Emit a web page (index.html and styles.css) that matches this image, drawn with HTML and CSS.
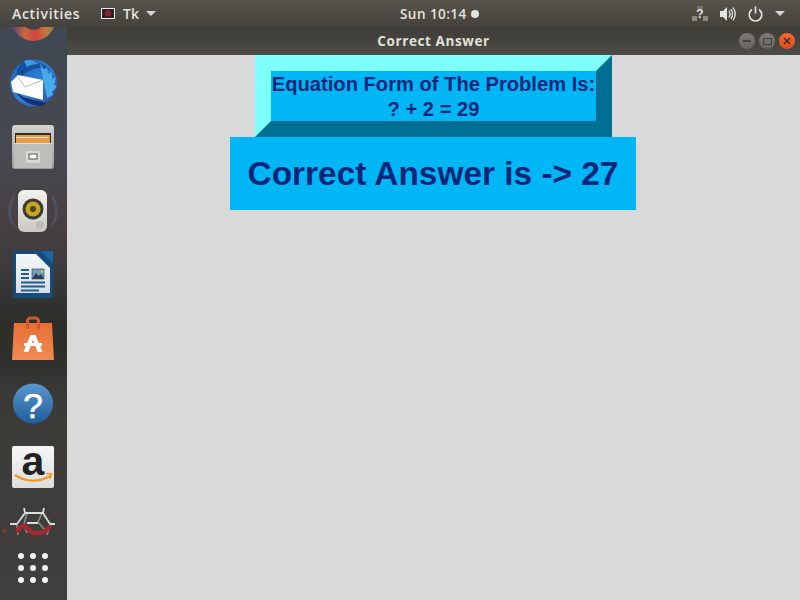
FILE: index.html
```html
<!DOCTYPE html>
<html lang="en">

<head>
  <meta charset="UTF-8">
  <title>Correct Answer</title>
  <link rel="stylesheet" href="styles.css">
</head>

<body>
  <header class="topbar">
    <div class="topbar-left">
      <span class="activities">Activities</span>
      <span class="tk-menu">
        <svg class="tk-icon" width="14" height="11" viewBox="0 0 14 11">
          <rect x="0.5" y="0.5" width="13" height="10" fill="#2a2426" stroke="#eeeeec" />
          <circle cx="7" cy="5.5" r="3" fill="#a3202c" />
          <path d="M5.500 4l3 3" stroke="#3a2426" stroke-width="0.800" />
        </svg>
        <span class="tk-label">Tk</span>
        <span class="caret"></span>
      </span>
    </div>
    <div class="clock">
      <span>Sun 10:14</span>
      <span class="clock-dot"></span>
    </div>
    <div class="tray">
      <svg width="16" height="16" viewBox="0 0 16 16">
        <rect x="5" y="0" width="6" height="3" fill="#75736c" />
        <rect x="0" y="10" width="5" height="5" fill="#8a8880" />
        <rect x="11" y="10" width="5" height="5" fill="#8a8880" />
        <text x="8" y="12" class="tray-q">?</text>
      </svg>
      <svg width="16" height="16" viewBox="0 0 16 16">
        <path d="M0 5h3l4-4v14l-4-4H0z" fill="#e4e4e0" />
        <path d="M9 4.500q2 3.500 0 7M11 3q3 5 0 10M13 1.500q4.500 6.500 0 13" fill="none" stroke="#e4e4e0" stroke-width="1.300" />
      </svg>
      <svg width="15" height="16" viewBox="0 0 15 16">
        <path d="M4 3.500a6.300 6.300 0 1 0 7 0" fill="none" stroke="#e4e4e0" stroke-width="1.600" />
        <path d="M7.500 0.500v7" stroke="#e4e4e0" stroke-width="1.600" />
      </svg>
      <span class="caret"></span>
    </div>
  </header>

  <div class="desktop">
    <nav class="dock">
      <svg class="dock-item" width="67" height="64" viewBox="0 -13 67 64">
        <defs>
          <linearGradient id="foxGrad" x1="0" y1="0" x2="1" y2="0">
            <stop offset="0.08" stop-color="#6d4a7a" />
            <stop offset="0.3" stop-color="#c96a3a" />
            <stop offset="0.55" stop-color="#d2443f" />
            <stop offset="0.8" stop-color="#c2793a" />
            <stop offset="1" stop-color="#7f7f4a" />
          </linearGradient>
          <linearGradient id="birdGrad" x1="0" y1="0" x2="1" y2="1">
            <stop offset="0" stop-color="#1c5fb4" />
            <stop offset="0.55" stop-color="#2f7fd6" />
            <stop offset="1" stop-color="#2c3f9e" />
          </linearGradient>
          <linearGradient id="cabinetGrad" x1="0" y1="0" x2="0" y2="1">
            <stop offset="0" stop-color="#d2d2cf" />
            <stop offset="1" stop-color="#9c9c99" />
          </linearGradient>
          <linearGradient id="speakerGrad" x1="0" y1="0" x2="0" y2="1">
            <stop offset="0" stop-color="#f3f2ed" />
            <stop offset="1" stop-color="#c9c8c1" />
          </linearGradient>
          <linearGradient id="pageGrad" x1="0" y1="0" x2="0" y2="1">
            <stop offset="0" stop-color="#f6f8f9" />
            <stop offset="1" stop-color="#d5dde3" />
          </linearGradient>
          <linearGradient id="bagGrad" x1="0" y1="0" x2="0" y2="1">
            <stop offset="0" stop-color="#e96f33" />
            <stop offset="1" stop-color="#f08a55" />
          </linearGradient>
          <linearGradient id="helpGrad" x1="0" y1="0" x2="0" y2="1">
            <stop offset="0" stop-color="#5b97cf" />
            <stop offset="1" stop-color="#1f5d9b" />
          </linearGradient>
          <linearGradient id="cardGrad" x1="0" y1="0" x2="0" y2="1">
            <stop offset="0" stop-color="#f6f6f6" />
            <stop offset="1" stop-color="#dcdcdc" />
          </linearGradient>
        </defs>
        <circle cx="33.500" cy="19" r="22" fill="url(#foxGrad)" />
        <circle cx="33.500" cy="19" r="11" fill="#3b4450" />
      </svg>
      <svg class="dock-item" width="67" height="64" viewBox="0 51 67 64">
        <circle cx="33.500" cy="83" r="23.500" fill="url(#birdGrad)" />
        <path d="M17 80c-2-10 3-18 12-21l3 4c6-1 14 1 19 8-5-3-11-4-17-2-7 2-12 6-17 11z" fill="#1850a0" />
        <path d="M24 61c4-2 10-1 14 3-4 0-8 1-11 3z" fill="#3a9be6" />
        <path d="M40 63l4 7 3-3 1 7 4-2v7l4-2-2 8 3 1-5 6 1 3-6 3z" fill="#45ace9" />
        <path d="M16 92l7 5 10 3 14 3-6 3c-9 0-19-5-25-14z" fill="#14306e" />
        <path d="M11 82l7-7 25 5v20l-30-8z" fill="#ffffff" />
        <path d="M18 77l7 10 18-7" fill="none" stroke="#a8a8a8" stroke-width="0.800" />
        <circle cx="22" cy="72" r="1" fill="#12203a" />
      </svg>
      <svg class="dock-item" width="67" height="64" viewBox="0 115 67 64">
        <rect x="12" y="125" width="42" height="44" rx="3" fill="url(#cabinetGrad)" />
        <rect x="15" y="133" width="36" height="11" fill="#2f2d2b" />
        <rect x="16" y="135" width="34" height="9" fill="#e69a4c" />
        <rect x="16" y="137" width="32" height="1" fill="#fbe9cc" />
        <rect x="14" y="143" width="38" height="25" fill="#bdbdba" />
        <rect x="14" y="143" width="38" height="1" fill="#dededb" />
        <rect x="26" y="151" width="14" height="12" rx="2" fill="#d9d9d6" />
        <rect x="29" y="154" width="8" height="5" fill="#fafafa" stroke="#55534f" />
      </svg>
      <svg class="dock-item" width="67" height="64" viewBox="0 179 67 64">
        <path d="M14 196q-8 15 0 30M52 196q8 15 0 30" fill="none" stroke="#5a7694" stroke-width="2" opacity="0.300" />
        <path d="M11 200q-5 11 0 22M55 200q5 11 0 22" fill="none" stroke="#5a7694" stroke-width="1.500" opacity="0.200" />
        <rect x="18" y="190" width="29" height="42" rx="6" fill="url(#speakerGrad)" />
        <circle cx="33" cy="209" r="10.500" fill="#3b3a36" />
        <circle cx="33" cy="209" r="7.500" fill="#c8a61e" />
        <circle cx="33" cy="209" r="3" fill="#4a4427" />
        <circle cx="40" cy="225" r="4" fill="#bcbbb6" />
      </svg>
      <svg class="dock-item" width="67" height="64" viewBox="0 243 67 64">
        <path d="M15 251h38v45a2 2 0 0 1-2 2H15a2 2 0 0 1-2-2v-43a2 2 0 0 1 2-2z" fill="#144d7c" />
        <path d="M16 254h20l14 14v25H16z" fill="url(#pageGrad)" />
        <path d="M41 251h12v12z" fill="#1a66a3" />
        <path d="M21 270h8M21 274h8M21 278h8M21 282.500h24M21 286.500h24M21 290.500h18" stroke="#1f5c90" stroke-width="1.800" />
        <rect x="32" y="269" width="12" height="10" fill="#6f9cc0" stroke="#2e3f52" stroke-width="0.600" />
        <path d="M32 279l4-6 2.500 3 2.500-2 3 5z" fill="#2e3f52" />
        <circle cx="42" cy="271.500" r="1.300" fill="#e8c84a" />
      </svg>
      <svg class="dock-item" width="67" height="64" viewBox="0 307 67 64">
        <path d="M14 323h38l2 37H12z" fill="url(#bagGrad)" />
        <path d="M27.500 329v-8a3 3 0 0 1 3-3h5a3 3 0 0 1 3 3v8" fill="none" stroke="#cf5a2b" stroke-width="3" />
        <path d="M30.500 335h5l7 17h-5l-4.500-12-4.500 12h-5z" fill="#ffffff" />
        <rect x="24" y="343" width="18" height="3" fill="#ffffff" />
      </svg>
      <svg class="dock-item" width="67" height="64" viewBox="0 371 67 64">
        <circle cx="33" cy="403.500" r="20" fill="url(#helpGrad)" />
        <text x="33" y="418" class="help-mark">?</text>
      </svg>
      <svg class="dock-item" width="67" height="64" viewBox="0 435 67 64">
        <rect x="12" y="446" width="42" height="42" rx="2" fill="url(#cardGrad)" />
        <text x="33" y="475" class="amazon-mark">a</text>
        <path d="M15 475q17 11 35 1" fill="none" stroke="#f19a1f" stroke-width="2.200" />
        <path d="M46 473.500l5.500 0.500-1.500 5" fill="none" stroke="#f19a1f" stroke-width="1.600" />
      </svg>
      <svg class="dock-item" width="67" height="46" viewBox="0 499 67 46">
        <circle cx="4.500" cy="531" r="2.500" fill="#6e3a2c" />
        <path d="M17 525l1 10M50 525l-3 10M27 513l-3 11M42 513l-4 9 7 8M24 524l3 9" fill="none" stroke="#84837e" stroke-width="1.800" />
        <path d="M10 524h7M50 524h5M25 513h18M25 513l-8 11M43 513l7 11M24 508l1 5M44 508l-1 5M27 523h11" fill="none" stroke="#dcdcd8" stroke-width="1.800" />
        <path d="M17 532q3-6 7-6c4 0 6 7 10 7h6q5 0 10-7" fill="none" stroke="#a3272c" stroke-width="4.500" />
      </svg>
      <svg class="dock-apps" width="67" height="46" viewBox="0 545 67 46">
        <g fill="#f2f2f2">
          <circle cx="21" cy="556" r="3" />
          <circle cx="33" cy="556" r="3" />
          <circle cx="45" cy="556" r="3" />
          <circle cx="21" cy="568" r="3" />
          <circle cx="33" cy="568" r="3" />
          <circle cx="45" cy="568" r="3" />
          <circle cx="21" cy="580" r="3" />
          <circle cx="33" cy="580" r="3" />
          <circle cx="45" cy="580" r="3" />
        </g>
      </svg>
    </nav>

    <div class="window">
      <div class="titlebar">
        <span class="window-title">Correct Answer</span>
        <div class="window-buttons">
          <span class="win-btn"><span class="win-min"></span></span>
          <span class="win-btn"><span class="win-max"></span></span>
          <span class="win-btn win-close">
            <svg width="8" height="8" viewBox="0 0 8 8">
              <path d="M1 1l6 6M7 1l-6 6" stroke="#3a2018" stroke-width="1.200" />
            </svg>
          </span>
        </div>
      </div>

      <main class="content">
        <div class="equation-box">
          <div class="equation-text">
            Equation Form of The Problem Is:<br>
            ? + 2 = 29
          </div>
        </div>
        <div class="answer">Correct Answer is -&gt; 27</div>
      </main>
    </div>
  </div>
</body>

</html>
```

FILE: styles.css
```css
* {
  box-sizing: border-box;
}

body {
  margin: 0;
  width: 800px;
  height: 600px;
  overflow: hidden;
  font-family: "Open Sans", "Noto Sans", sans-serif;
  background: #d9d9d9;
}

.topbar {
  display: grid;
  grid-template-columns: 388px 1fr auto;
  align-items: center;
  height: 27px;
  padding: 0 15px 0 12px;
  background: linear-gradient(#57544c, #45423c);
  color: #e6e4de;
  font-size: 14px;
  font-weight: 600;
}

.topbar-left {
  display: flex;
  align-items: center;
}

.activities {
  width: 89px;
  letter-spacing: 0.7px;
}

.tk-menu {
  display: flex;
  align-items: center;
}

.tk-icon {
  margin-right: 8px;
}

.tk-label {
  margin-right: 7px;
}

.caret {
  width: 0;
  height: 0;
  border-left: 5px solid transparent;
  border-right: 5px solid transparent;
  border-top: 5px solid #d8d6d0;
}

.clock {
  display: flex;
  align-items: center;
  gap: 4px;
  font-size: 13.5px;
  letter-spacing: 0.45px;
}

.clock-dot {
  width: 8px;
  height: 8px;
  border-radius: 50%;
  background: #e6e4de;
}

.tray {
  display: flex;
  align-items: center;
  gap: 12px;
}

.tray-q {
  font-family: "Liberation Sans", sans-serif;
  font-size: 12px;
  font-weight: 700;
  text-anchor: middle;
  fill: #e4e4e0;
}

.desktop {
  display: flex;
  height: 573px;
}

.dock {
  display: flex;
  flex-direction: column;
  flex: none;
  width: 67px;
  overflow: hidden;
  background: linear-gradient(#3f4853 0, #48484f 22%, #463f42 36%, #3c3a3c 42%, #2c2e29 52%, #2f302c 58%, #3a3a38 64%, #3c3b38 70%, #413f3e 100%);
}

.dock-item,
.dock-apps {
  display: block;
  flex: none;
}

.dock-item:first-child {
  margin-top: -40px;
}

.help-mark {
  font-family: "Liberation Sans", sans-serif;
  font-size: 35px;
  text-anchor: middle;
  fill: #ffffff;
  stroke: #ffffff;
  stroke-width: 0.6px;
}

.amazon-mark {
  font-family: "Liberation Sans", sans-serif;
  font-size: 41px;
  font-weight: 700;
  text-anchor: middle;
  fill: #222222;
}

.window {
  flex: 1;
  display: flex;
  flex-direction: column;
}

.titlebar {
  position: relative;
  display: flex;
  align-items: center;
  justify-content: center;
  height: 28px;
  background: linear-gradient(#3e3c36, #4e4c46);
}

.window-title {
  color: #e2e0da;
  font-size: 13.5px;
  font-weight: 700;
  letter-spacing: 0.6px;
}

.window-buttons {
  position: absolute;
  right: 5px;
  top: 6px;
  display: flex;
  gap: 4px;
}

.win-btn {
  display: flex;
  align-items: center;
  justify-content: center;
  width: 16px;
  height: 16px;
  border-radius: 50%;
  background: linear-gradient(#7d7b74, #66645e);
}

.win-min {
  width: 8px;
  height: 2px;
  background: #44433f;
}

.win-max {
  width: 9px;
  height: 7px;
  border: 1px solid #44433f;
}

.win-close {
  background: linear-gradient(#ef6a35, #dd4e1c);
}

.content {
  flex: 1;
  display: flex;
  flex-direction: column;
  align-items: center;
  background: #d9d9d9;
}

.equation-box {
  width: 357px;
  height: 82px;
  border: 16px solid;
  border-color: #80ffff #006f94 #006f94 #80ffff;
  background: #00b6f4;
}

.equation-text {
  padding-top: 1px;
  font-family: "Liberation Sans", sans-serif;
  font-size: 20.15px;
  font-weight: 700;
  line-height: 25px;
  text-align: center;
  color: #00267a;
}

.answer {
  width: 406px;
  height: 73px;
  margin-right: 1px;
  background: #00b6f4;
  color: #00267a;
  font-family: "Liberation Sans", sans-serif;
  font-size: 33.4px;
  font-weight: 700;
  line-height: 73px;
  text-align: center;
}
```
